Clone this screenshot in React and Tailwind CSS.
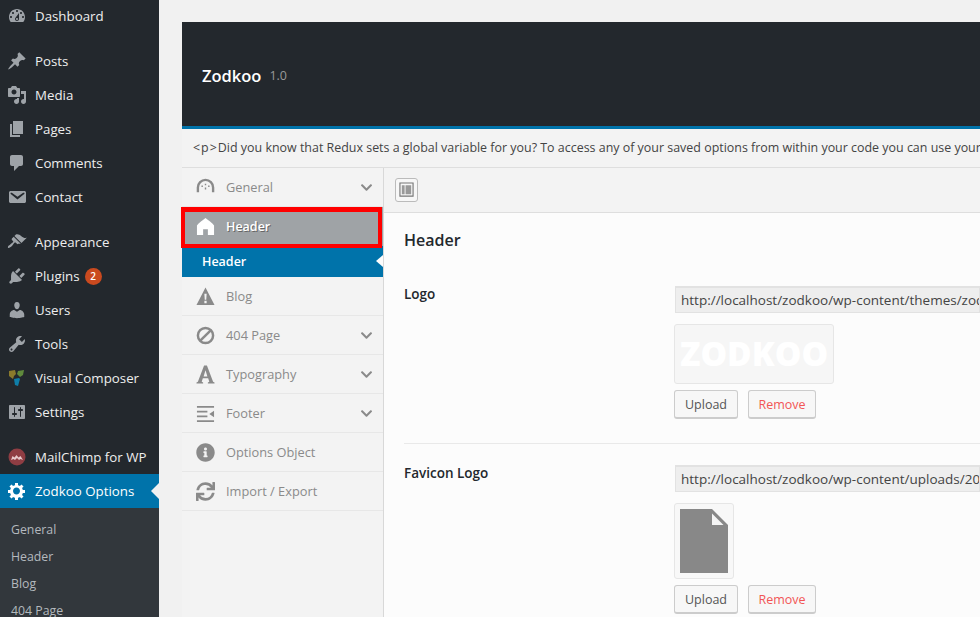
import React from "react";
import { FaInfoCircle, FaSync, FaChevronDown } from "react-icons/fa";

const P = {
  dashboard: "M3.76 16h12.48c1.1-1.37 1.76-3.11 1.76-5 0-4.42-3.58-8-8-8s-8 3.58-8 8c0 1.89.66 3.63 1.76 5zM10 4c.55 0 1 .45 1 1s-.45 1-1 1-1-.45-1-1 .45-1 1-1zM6 6c.55 0 1 .45 1 1s-.45 1-1 1-1-.45-1-1 .45-1 1-1zm8 0c.55 0 1 .45 1 1s-.45 1-1 1-1-.45-1-1 .45-1 1-1zm-5.37 5.55L12 7v6c0 1.1-.9 2-2 2s-2-.9-2-2c0-.57.24-1.08.63-1.45zM4 10c.55 0 1 .45 1 1s-.45 1-1 1-1-.45-1-1 .45-1 1-1zm12 0c.55 0 1 .45 1 1s-.45 1-1 1-1-.45-1-1 .45-1 1-1zm-5 3c0-.55-.45-1-1-1s-1 .45-1 1 .45 1 1 1 1-.45 1-1z",
  post: "M10.44 3.02l1.82-1.82 6.36 6.35-1.83 1.82c-1.05-.68-2.48-.57-3.41.36l-.75.75c-.92.93-1.04 2.35-.35 3.41l-1.83 1.82-2.41-2.41-2.8 2.79c-.42.42-3.38 2.71-3.8 2.29s1.86-3.39 2.28-3.81l2.79-2.79L4.1 9.36l1.83-1.82c1.05.69 2.48.57 3.4-.36l.75-.75c.93-.92 1.05-2.35.36-3.41z",
  media: "M13 11V4c0-.55-.45-1-1-1h-1.67L9 1H5L3.67 3H2c-.55 0-1 .45-1 1v7c0 .55.45 1 1 1h10c.55 0 1-.45 1-1zM7 4.5c1.38 0 2.5 1.12 2.5 2.5S8.38 9.5 7 9.5 4.5 8.38 4.5 7 5.62 4.5 7 4.5zM14 6h5v10.5c0 1.38-1.12 2.5-2.5 2.5S14 17.88 14 16.5s1.12-2.5 2.5-2.5c.17 0 .34.02.5.05V9h-3V6zm-4 8.05V13h2v3.5c0 1.38-1.12 2.5-2.5 2.5S7 17.88 7 16.5 8.12 14 9.5 14c.17 0 .34.02.5.05z",
  page: "M6 15V2h10v13H6zm-1 1h8v2H3V5h2v11z",
  comments: "M5 2h9c1.1 0 2 .9 2 2v7c0 1.1-.9 2-2 2h-2l-5 5v-5H5c-1.1 0-2-.9-2-2V4c0-1.1.9-2 2-2z",
  email: "M3.87 4h13.25C18.37 4 19 4.59 19 5.79v8.42c0 1.19-.63 1.79-1.88 1.79H3.87c-1.25 0-1.88-.6-1.88-1.79V5.79c0-1.2.63-1.79 1.88-1.79zm6.62 8.6l6.74-5.53c.24-.2.43-.66.13-1.07-.29-.41-.82-.42-1.17-.17l-5.7 3.86L4.8 5.83c-.35-.25-.88-.24-1.17.17-.3.41-.11.87.13 1.07z",
  appearance: "M14.48 11.06L7.41 3.99l1.5-1.5c.5-.56 2.3-.47 3.51.32 1.21.8 1.43 1.28 2.91 2.1 1.18.64 2.45 1.26 4.45.85zm-.71.71L6.7 4.7 4.93 6.47c-.39.39-.39 1.02 0 1.41l1.06 1.06c.39.39.39 1.03 0 1.42-.6.6-1.43 1.11-2.21 1.69-.35.26-.7.53-1.01.84C1.43 13.23.4 15.1 1.05 15.75c.65.65 2.52-.38 3.86-1.72.31-.31.58-.66.84-1.01.58-.78 1.09-1.61 1.69-2.21.39-.39 1.03-.39 1.42 0l1.06 1.06c.39.39 1.02.39 1.41 0z",
  plugin: "M13.11 4.36L9.87 7.6 8 5.73l3.24-3.24c.35-.34 1.05-.2 1.56.32.52.51.66 1.21.31 1.55zm-8 1.77l.91-1.12 9.01 9.01-1.19.84c-.71.71-2.63 1.16-3.82 1.16H6.14L4.9 17.26c-.59.59-1.54.59-2.12 0-.59-.58-.59-1.53 0-2.12l1.24-1.24v-3.88c0-1.13.4-3.19 1.09-3.89zm7.26 3.97l3.24-3.24c.34-.35 1.04-.21 1.55.31.52.51.66 1.21.31 1.55l-3.24 3.25z",
  users: "M10 9.25c-2.27 0-2.73-3.44-2.73-3.44C7 4.02 7.82 2 9.97 2c2.16 0 2.98 2.02 2.71 3.81 0 0-.41 3.44-2.68 3.44zm0 2.57L12.72 10c2.39 0 4.52 2.33 4.52 4.53v2.49s-3.65 1.13-7.24 1.13c-3.65 0-7.24-1.13-7.24-1.13v-2.49c0-2.25 1.94-4.48 4.47-4.48z",
  tools: "M16.68 9.77c-1.34 1.34-3.3 1.67-4.95.99l-5.41 6.52c-.99.99-2.59.99-3.58 0s-.99-2.59 0-3.57l6.52-5.42c-.68-1.65-.35-3.61.99-4.95 1.28-1.28 3.12-1.62 4.72-1.06l-2.89 2.89 2.82 2.82 2.86-2.87c.53 1.58.18 3.39-1.08 4.65zM3.81 16.21c.4.39 1.04.39 1.43 0 .4-.4.4-1.04 0-1.43-.39-.4-1.03-.4-1.43 0-.39.39-.39 1.03 0 1.43z",
  settings: "M18 16V4c0-.55-.45-1-1-1H3c-.55 0-1 .45-1 1v12c0 .55.45 1 1 1h14c.55 0 1-.45 1-1zM8 11h1c.55 0 1 .45 1 1s-.45 1-1 1H8v1.5c0 .28-.22.5-.5.5s-.5-.22-.5-.5V13H6c-.55 0-1-.45-1-1s.45-1 1-1h1V5.5c0-.28.22-.5.5-.5s.5.22.5.5V11zm5-2h-1c-.55 0-1-.45-1-1s.45-1 1-1h1V5.5c0-.28.22-.5.5-.5s.5.22.5.5V7h1c.55 0 1 .45 1 1s-.45 1-1 1h-1v5.5c0 .28-.22.5-.5.5s-.5-.22-.5-.5V9z",
  gear: "M18 12h-2.18c-.17.7-.44 1.35-.81 1.93l1.54 1.54-2.1 2.1-1.54-1.54c-.58.36-1.23.63-1.91.79V19H8v-2.18c-.68-.16-1.33-.43-1.91-.79l-1.54 1.54-2.12-2.12 1.54-1.54c-.36-.58-.63-1.23-.79-1.91H1V9.03h2.17c.16-.7.44-1.35.8-1.94L2.43 5.55l2.1-2.1 1.54 1.54c.58-.37 1.24-.64 1.93-.81V2h3v2.18c.68.16 1.33.43 1.91.79l1.53-1.53 2.12 2.12-1.53 1.53c.36.58.63 1.23.79 1.91H18v3zm-8.500 1.500c1.930 0 3.500-1.570 3.500-3.500s-1.570-3.500-3.500-3.500S6 8.070 6 10s1.570 3.500 3.500 3.500z",
};

function Dash({ d, white }) {
  return (
    <svg viewBox="0 0 20 20" className={`w-5 h-5 ${white ? "text-white" : "text-[#9ea3a8]"}`} fill="currentColor">
      <path d={d} />
    </svg>
  );
}

function VC() {
  return (
    <svg viewBox="0 0 20 20" className="w-5 h-5">
      <path d="M2 3l6-1 1 4-2 2-1 3-4-3z" fill="#8a7a2c" />
      <path d="M11 3l6-1-1 5-3 2-3-3z" fill="#5f8a3c" />
      <path d="M7 11l5-1 1 1-2 7-3-1z" fill="#0f7ea8" />
    </svg>
  );
}

function Chimp() {
  return (
    <svg viewBox="0 0 20 20" className="w-5 h-5">
      <circle cx="10" cy="10" r="8.5" fill="#8f3d43" />
      <path d="M4 13l1.5-4 2 1.500 2-2.500 2 2.500 2-1.500 2.500 4-2.500-1-1.500 1-2-2-2 2-1.500-1z" fill="#e7c9cb" />
    </svg>
  );
}

function Row({ icon, children, gap }) {
  return (
    <div className={`flex items-center h-[34px] pl-[7px] ${gap ? "mb-[11px]" : ""}`}>
      <span className="w-[28px] flex shrink-0">{icon}</span>
      <span className="pt-[2px]">{children}</span>
    </div>
  );
}

function Side({ icon, label, chevron }) {
  return (
    <div className="flex items-center h-[39px] border-b border-[#e7e7e7] pl-[14px] pr-[10px] text-[#8a8a8a] text-[12.8px]">
      <span className="w-[30px] flex shrink-0 text-[#8a8a8a]">{icon}</span>
      <span className="flex-1 pt-[2px]">{label}</span>
      {chevron && <FaChevronDown className="w-[13px] h-[13px]" />}
    </div>
  );
}

function Btns() {
  const base = "h-[29px] pt-[2px] flex items-center justify-center rounded-[3px] border border-[#ccc] border-b-2 bg-[#f7f7f7] text-[12.5px]";
  return (
    <div className="flex gap-[10px]">
      <span className={`${base} w-[64px] text-[#555]`}>Upload</span>
      <span className={`${base} w-[68px] text-[#f25555]`}>Remove</span>
    </div>
  );
}

function Url({ children }) {
  return (
    <div className="h-[27px] pt-px flex items-center pl-[5px] bg-[#eeeeee] border border-[#e2e2e2] border-t-2 text-[13.5px] text-[#444] whitespace-nowrap overflow-hidden">
      {children}
    </div>
  );
}

const ic = "w-[19px] h-[19px]";

export default function App() {
  return (
    <div className="w-[980px] h-[617px] overflow-hidden flex bg-[#f1f1f1] font-['Open_Sans',sans-serif]">
      {/* admin sidebar */}
      <aside className="w-[159px] shrink-0 bg-[#23282d] text-[#eeeeee] text-[13.3px] flex flex-col">
        <div className="-mt-px">
          <Row gap icon={<Dash d={P.dashboard} />}>Dashboard</Row>
          <Row icon={<Dash d={P.post} />}>Posts</Row>
          <Row icon={<Dash d={P.media} />}>Media</Row>
          <Row icon={<Dash d={P.page} />}>Pages</Row>
          <Row icon={<Dash d={P.comments} />}>Comments</Row>
          <Row gap icon={<Dash d={P.email} />}>Contact</Row>
          <Row icon={<Dash d={P.appearance} />}>Appearance</Row>
          <div className="flex items-center">
            <Row icon={<Dash d={P.plugin} />}>Plugins</Row>
            <span className="ml-[5px] w-[17px] h-[17px] rounded-full bg-[#ca4a1f] text-white text-[10px] font-semibold flex items-center justify-center">2</span>
          </div>
          <Row icon={<Dash d={P.users} />}>Users</Row>
          <Row icon={<Dash d={P.tools} />}>Tools</Row>
          <Row icon={<VC />}>Visual Composer</Row>
          <Row gap icon={<Dash d={P.settings} />}>Settings</Row>
          <Row icon={<Chimp />}>MailChimp for WP</Row>
          <div className="relative bg-[#0073aa] text-white">
            <Row icon={<Dash d={P.gear} white />}>Zodkoo Options</Row>
            <span className="absolute right-0 top-[9px] w-0 h-0 border-y-[8px] border-y-transparent border-r-[8px] border-r-[#f1f1f1]" />
          </div>
        </div>
        <div className="flex-1 bg-[#32373c] text-[#b4b9be] text-[12.3px] pl-[11px] pt-[9px]">
          <div className="h-[27px] flex items-center">General</div>
          <div className="h-[27px] flex items-center">Header</div>
          <div className="h-[27px] flex items-center">Blog</div>
          <div className="h-[27px] flex items-center">404 Page</div>
        </div>
      </aside>

      {/* options panel */}
      <main className="flex-1 min-w-0 pl-[23px] pt-[22px] overflow-hidden">
        <div className="h-[104px] bg-[#23282d] box-content border-b-[3px] border-b-[#0073aa] flex items-center pl-[20px]">
          <span className="text-white font-semibold text-[16.5px] pt-[4px]">Zodkoo</span>
          <span className="ml-[8px] text-[#999] text-[12.5px] pt-[4px]">1.0</span>
        </div>
        <div className="h-[39px] bg-[#f3f3f3] border-b border-[#dedede] flex items-center pl-[11px] text-[12.45px] text-[#444] whitespace-nowrap overflow-hidden">
          <span className="tracking-[1px]">{"<p>"}</span>
          Did you know that Redux sets a global variable for you? To access any of your saved options from within your code you can use your global variable
        </div>

        <div className="flex h-[460px]">
          <nav className="relative w-[202px] shrink-0 bg-[#f3f3f3] border-r border-[#d8d8d8]">
            <Side label="General" chevron icon={
              <svg viewBox="0 0 20 20" className={ic} fill="none" stroke="currentColor">
                <path d="M2 15V10a8 8 0 0 1 16 0v5" strokeWidth="2.500" />
                <path d="M10 6v1.500M6.500 8v1.500M13.500 8v1.500M10 10v2" strokeWidth="1.500" />
              </svg>
            } />
            <div className="flex items-center h-[39px] bg-[#9fa3a6] pl-[14px] text-white font-semibold text-[12.5px] [text-shadow:1px_1px_#666]">
              <span className="w-[30px] flex">
                <svg viewBox="0 0 20 20" className={ic} fill="#fff">
                  <path d="M10 1l3 2.500C15 5 17 6.500 19 9v10h-6.500v-6h-5v6H1V9c2-2.500 4-4 6-5.500z" />
                </svg>
              </span>
              <span className="pt-[2px]">Header</span>
            </div>
            <div className="relative flex items-center h-[31px] bg-[#0073aa] pl-[20px] text-white font-semibold text-[12.5px]">
              <span className="pt-[2px]">Header</span>
              <span className="absolute right-0 top-[9px] w-0 h-0 border-y-[6px] border-y-transparent border-r-[7px] border-r-[#fcfcfc]" />
            </div>
            <Side label="Blog" icon={
              <svg viewBox="0 0 20 20" className={ic} fill="currentColor" fillRule="evenodd">
                <path d="M10 .5L19.500 19H.5zM8.800 7h2.400l-.4 6.500H9.200zM8.800 14.500h2.400V17H8.800z" />
              </svg>
            } />
            <Side label="404 Page" chevron icon={
              <svg viewBox="0 0 20 20" className={ic} fill="none" stroke="currentColor" strokeWidth="2.600">
                <circle cx="10" cy="10" r="8" />
                <path d="M4.500 15.500l11-11" />
              </svg>
            } />
            <Side label="Typography" chevron icon={
              <svg viewBox="0 0 20 20" className={ic} fill="currentColor" fillRule="evenodd">
                <path d="M8.500 .5h3L18 17.500l1.500 1V19.500h-7v-1l1.500-1-1.200-3.500H7.200L6 17.500l1.500 1v1H.5v-1l1.500-1zM10 5.500L8 12h4z" />
              </svg>
            } />
            <Side label="Footer" chevron icon={
              <svg viewBox="0 0 20 20" className={ic} fill="currentColor">
                <path d="M1 2h18v2H1zM1 7h11v2H1zM1 12h11v2H1zM1 17h18v2H1zM19 7v7l-5-3.500z" />
              </svg>
            } />
            <Side label="Options Object" icon={<FaInfoCircle className={ic} />} />
            <Side label="Import / Export" icon={<FaSync className={ic} />} />
            {/* red annotation */}
            <div className="absolute -left-px top-[39px] w-[201px] h-[41px] border-[4px] border-t-[5px] border-[#ff0000]" />
          </nav>

          <section className="flex-1 min-w-0 bg-[#fcfcfc]">
            <div className="h-[45px] bg-[#f3f3f3] border-b border-[#dedede] flex items-center pl-[11px] pb-px">
              <span className="w-[23px] h-[24px] flex items-center justify-center rounded-[3px] border border-[#bbb] bg-[#f7f7f7]">
                <svg viewBox="0 0 16 16" className="w-[15px] h-[15px]">
                  <path d="M1 1h14v14H1z" fill="#f7f7f7" stroke="#777" strokeWidth="1.200" />
                  <path d="M3 3.500h3v9.500H3zM7 3.500h6v9.500H7z" fill="#999" />
                </svg>
              </span>
            </div>
            <div className="pl-[20px]">
              <h3 className="text-[16px] font-semibold text-[#23282d] pt-[15px] leading-[24px]">Header</h3>
              <div className="flex pt-[34px] border-b border-[#e9e9e9] pb-[24px]">
                <div className="w-[270px] shrink-0 text-[13.5px] font-semibold text-[#23282d] pt-px leading-[14px]">Logo</div>
                <div className="flex-1 min-w-0 flex flex-col">
                  <div className="pl-[1px]"><Url>http://localhost/zodkoo/wp-content/themes/zodkoo/images/logo.png</Url></div>
                  <div className="mt-[11px] w-[160px] h-[60px] bg-[#f6f6f6] border border-[#e6e6e6] rounded-[3px] flex items-center justify-center text-white font-extrabold text-[33.5px] leading-none overflow-hidden">ZODKOO</div>
                  <div className="mt-[6px]"><Btns /></div>
                </div>
              </div>
              <div className="flex pt-[21px]">
                <div className="w-[270px] shrink-0 text-[13.5px] font-semibold text-[#23282d] pt-px leading-[14px]">Favicon Logo</div>
                <div className="flex-1 min-w-0 flex flex-col">
                  <div className="pl-[1px]"><Url>http://localhost/zodkoo/wp-content/uploads/2016/12/favicon.png</Url></div>
                  <div className="mt-[11px] w-[60px] h-[76px] bg-[#f8f8f8] border border-[#e6e6e6] rounded-[3px] flex items-center justify-center">
                    <svg viewBox="0 0 48 64" className="w-[48px] h-[64px]">
                      <path d="M0 0h32l16 16v48H0z" fill="#888" />
                      <path d="M32 4.500V16h11.500z" fill="#f4f4f4" />
                    </svg>
                  </div>
                  <div className="mt-[6px]"><Btns /></div>
                </div>
              </div>
            </div>
          </section>
        </div>
      </main>
    </div>
  );
}
